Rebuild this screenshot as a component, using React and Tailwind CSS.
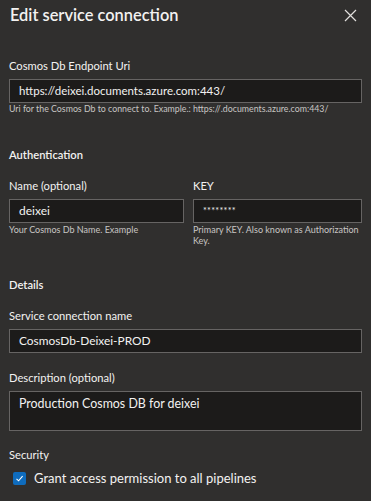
export default function App() {
  const inputCls = "h-6 w-full border border-[#666463] bg-[#1c1b1a] px-[9px] text-[#f3f2f1] flex items-center"
  const labelCls = "text-[11.2px] text-[#f3f2f1] leading-4"
  const headCls = "text-[11.2px] font-semibold text-[#f3f2f1] leading-4"

  return (
    <div className="w-[371px] h-[501px] bg-[#302f2e] overflow-hidden font-['Lato',sans-serif]">
      <div className="flex items-center justify-between pl-[10px] pr-[14px] h-[30px]">
        <h1 className="text-[16.4px] font-semibold text-[#f3f2f1]">Edit service connection</h1>
        <svg width="13" height="13" viewBox="0 0 13 13" className="text-[#e1dfdd]">
          <path d="M1 1 L12 12 M12 1 L1 12" stroke="currentColor" strokeWidth="1.2" fill="none" />
        </svg>
      </div>

      <div className="px-[9px]">
        <div className="pt-[28px]">
          <div className={labelCls}>Cosmos Db Endpoint Uri</div>
          <div className={`${inputCls} mt-[5px] text-[11.5px]`}>https://deixei.documents.azure.com:443/</div>
          <div className="text-[8.8px] leading-[12px] text-[#c8c6c4] whitespace-nowrap">Uri for the Cosmos Db to connect to. Example.: https://.documents.azure.com:443/</div>
        </div>

        <div className="pt-[32px]">
          <div className={headCls}>Authentication</div>
          <div className="grid grid-cols-[175px_1fr] gap-[9px] mt-[15px]">
            <div>
              <div className={labelCls}>Name (optional)</div>
              <div className={`${inputCls} mt-[5px] text-[12px]`}>deixei</div>
              <div className="text-[9px] leading-[11px] mt-[1px] text-[#c8c6c4]">Your Cosmos Db Name. Example</div>
            </div>
            <div>
              <div className={labelCls}>KEY</div>
              <div className={`${inputCls} mt-[5px] text-[9px] tracking-[0.3px]`}>********</div>
              <div className="text-[9px] leading-[11px] mt-[1px] text-[#c8c6c4]">
                <span className="whitespace-nowrap">Primary KEY. Also known as Authorization</span>
                <br />Key.
              </div>
            </div>
          </div>
        </div>

        <div className="pt-[31px]">
          <div className={headCls}>Details</div>
          <div className="mt-[15px]">
            <div className={labelCls}>Service connection name</div>
            <div className={`${inputCls} mt-[5px] text-[11.9px]`}>CosmosDb-Deixei-PROD</div>
          </div>
          <div className="mt-[17px]">
            <div className={labelCls}>Description (optional)</div>
            <div className="h-10 w-full border border-[#666463] bg-[#1c1b1a] px-[9px] pt-[4px] text-[12.4px] leading-4 text-[#f3f2f1] mt-[5px]">Production Cosmos DB for deixei</div>
          </div>
        </div>

        <div className="pt-[16px]">
          <div className={labelCls}>Security</div>
          <label className="flex items-center gap-[8px] mt-[7px] pl-[4px]">
            <span className="w-[13px] h-[13px] rounded-[2px] bg-[#0f6cbd] flex items-center justify-center">
              <svg width="9" height="9" viewBox="0 0 9 9">
                <path d="M1.5 4.8 L3.6 6.8 L7.6 2.2" stroke="white" strokeWidth="1.1" fill="none" />
              </svg>
            </span>
            <span className="text-[13px] leading-4 text-[#f3f2f1]">Grant access permission to all pipelines</span>
          </label>
        </div>
      </div>
    </div>
  )
}
